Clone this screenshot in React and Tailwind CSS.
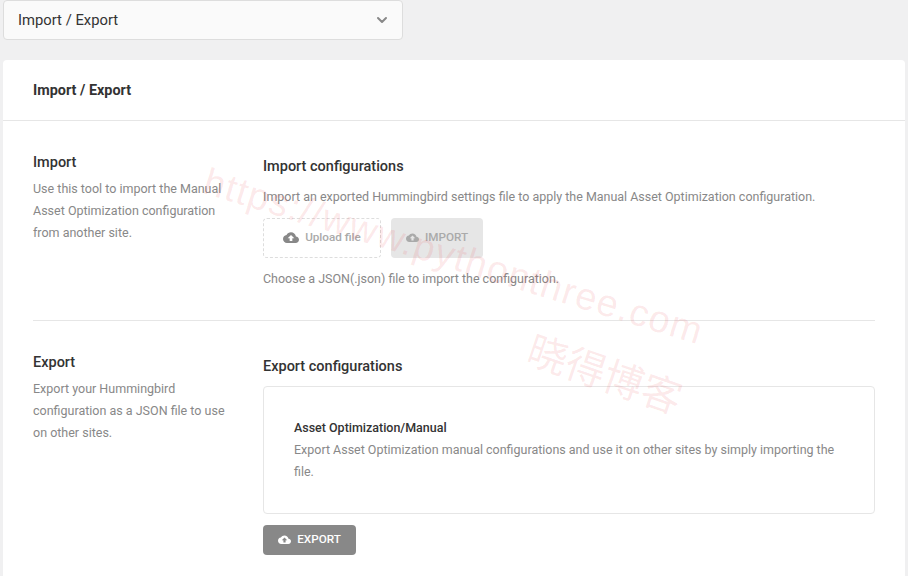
import React from 'react';
import { ChevronDown } from 'lucide-react';

const CloudIcon = ({ className }) => (
    <svg viewBox="0 0 24 18" className={className} fill="currentColor">
        <path d="M19.4 6.8C18.7 3 15.7 0.5 12 0.5 9.1 0.5 6.6 2.1 5.3 4.6 2.3 4.9 0 7.5 0 10.5c0 3.300 2.700 6 6 6h13c2.800 0 5-2.200 5-5 0-2.600-2.100-4.500-4.600-4.700zM14 9.500v4h-4v-4H7l5-5 5 5h-3z" />
    </svg>
);

const App = () => {
    return (
        <div className="relative h-[576px] w-[908px] overflow-hidden bg-[#f0f0f1] font-['Roboto',sans-serif]">
            <div className="px-[3px]">
                <div className="flex h-10 w-[400px] items-center justify-between rounded border border-[#ddd] bg-[#fafafa] pl-[14px] pr-[12px] text-[14.8px] text-[#333]">
                    <span>Import / Export</span>
                    <ChevronDown size={16} strokeWidth={3} className="text-[#888]" />
                </div>

                <div className="mt-5 rounded-t bg-white pb-[30px]">
                    <div className="flex h-[61px] items-center border-b border-[#e6e6e6] px-[30px] pt-[2px]">
                        <h1 className="text-[14.4px] font-bold text-[#333]">Import / Export</h1>
                    </div>

                    <div className="px-[30px]">
                        <div className="flex h-[200px] border-b border-[#e6e6e6] pt-[31px]">
                            <div className="w-[230px] shrink-0">
                                <h2 className="text-[14.5px] font-medium leading-[22px] text-[#333]">Import</h2>
                                <p className="mt-[4px] w-[195px] text-[12.5px] leading-[22px] text-[#888]">
                                    Use this tool to import the Manual Asset Optimization configuration from another site.
                                </p>
                            </div>
                            <div className="flex-1">
                                <h3 className="text-[14.5px] font-medium leading-[30px] text-[#333]">Import configurations</h3>
                                <p className="mt-[4px] text-[12.47px] leading-[22px] text-[#888]">
                                    Import an exported Hummingbird settings file to apply the Manual Asset Optimization configuration.
                                </p>
                                <div className="mt-[10px] flex gap-[10px]">
                                    <div className="flex h-10 w-[118px] items-center justify-center gap-[6px] rounded border border-dashed border-[#ddd] text-[11.7px] font-medium text-[#aaa]">
                                        <CloudIcon className="h-3 w-4 text-[#888]" />
                                        <span>Upload file</span>
                                    </div>
                                    <button type="button" className="flex h-10 w-[92px] items-center justify-center gap-[6px] rounded bg-[#e6e6e6] text-[11.7px] font-medium text-[#aaa]">
                                        <CloudIcon className="h-[10px] w-[13px] text-[#aaa]" />
                                        IMPORT
                                    </button>
                                </div>
                                <p className="mt-[10px] text-[12.47px] leading-[22px] text-[#888]">Choose a JSON(.json) file to import the configuration.</p>
                            </div>
                        </div>

                        <div className="flex pt-[31px]">
                            <div className="w-[230px] shrink-0">
                                <h2 className="text-[14.5px] font-medium leading-[22px] text-[#333]">Export</h2>
                                <p className="mt-[4px] w-[195px] text-[12.5px] leading-[22px] text-[#888]">
                                    Export your Hummingbird configuration as a JSON file to use on other sites.
                                </p>
                            </div>
                            <div className="flex-1">
                                <h3 className="text-[14.5px] font-medium leading-[30px] text-[#333]">Export configurations</h3>
                                <div className="mt-[4px] h-[128px] rounded border border-[#e6e6e6] px-[30px] pt-[30px]">
                                    <h4 className="text-[12.47px] font-medium leading-[22px] text-[#333]">Asset Optimization/Manual</h4>
                                    <p className="text-[12.47px] leading-[22px] text-[#888]">
                                        Export Asset Optimization manual configurations and use it on other sites by simply importing the file.
                                    </p>
                                </div>
                                <button type="button" className="mt-[11px] flex h-[30px] w-[93px] items-center justify-center gap-[6px] rounded bg-[#888] text-[11.7px] font-medium text-white">
                                    <CloudIcon className="h-[10px] w-[13px] text-white" />
                                    EXPORT
                                </button>
                            </div>
                        </div>
                    </div>
                </div>
            </div>

            {/* watermark over the page */}
            <span className="pointer-events-none absolute left-[205px] top-[152px] origin-left rotate-[17deg] whitespace-nowrap font-['Liberation_Sans',sans-serif] text-[38px] leading-[56px] tracking-[1.2px] text-[#e8202a]/10">
                https://www.pythonthree.com
            </span>
            <span className="pointer-events-none absolute left-[530px] top-[316px] origin-left rotate-[19deg] whitespace-nowrap font-['Noto_Sans_CJK_SC',sans-serif] text-[40px] text-[#e8202a]/10">
                晓得博客
            </span>
        </div>
    );
};

export default App;
